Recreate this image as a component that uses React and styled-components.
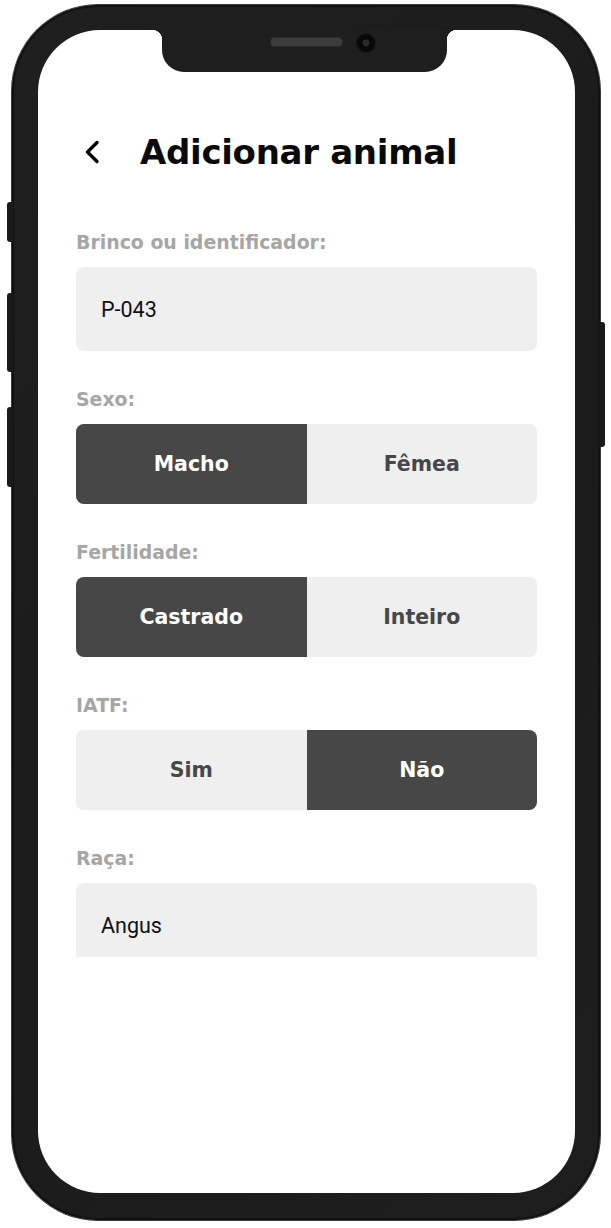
import React from 'react';
import styled, { createGlobalStyle } from 'styled-components';

const GlobalStyle = createGlobalStyle`
  html, body {
    margin: 0;
    padding: 0;
    background: #ffffff;
  }
  * {
    box-sizing: border-box;
  }
`;

const Page = styled.div`
  padding: 5px 11px 8px 12px;
  background: #ffffff;
`;

// Phone frame
const Phone = styled.div`
  position: relative;
  width: 588px;
  height: 1215px;
  padding: 25px 25px 27px 26px;
  border-radius: 86px;
  background: linear-gradient(135deg, #1f1f1f 0%, #1b1b1b 50%, #1e1e1e 100%);
  box-shadow: inset 0 0 0 2px #111111, 0 0 0 1px #3a3a3a;
`;

const SideButton = styled.div`
  position: absolute;
  top: ${(p) => p.$top}px;
  height: ${(p) => p.$height}px;
  width: 6px;
  background: #1a1a1a;
  ${(p) => (p.$right ? 'right: -5px; border-radius: 0 3px 3px 0;' : 'left: -5px; border-radius: 3px 0 0 3px;')}
`;

const Screen = styled.div`
  position: relative;
  width: 537px;
  height: 1163px;
  border-radius: 62px;
  background: #ffffff;
  overflow: hidden;
  font-family: 'DejaVu Sans', 'Inter', sans-serif;
`;

const Notch = styled.div`
  position: absolute;
  top: 0;
  left: 124px;
  width: 285px;
  height: 42px;
  background: #1e1e1e;
  border-radius: 0 0 22px 22px;

  &::before,
  &::after {
    content: '';
    position: absolute;
    top: 0;
    width: 10px;
    height: 10px;
    background: radial-gradient(circle at 0 100%, transparent 10px, #1e1e1e 10.5px);
  }
  &::before {
    left: -10px;
  }
  &::after {
    right: -10px;
    background: radial-gradient(circle at 100% 100%, transparent 10px, #1e1e1e 10.5px);
  }
`;

const Speaker = styled.div`
  position: absolute;
  top: 7px;
  left: 108px;
  width: 73px;
  height: 10px;
  border-radius: 5px;
  background: #3c3c3c;
  box-shadow: inset 0 0 0 1px #2c2c2c;
`;

const Camera = styled.div`
  position: absolute;
  top: 4px;
  left: 195px;
  width: 18px;
  height: 18px;
  border-radius: 50%;
  background: radial-gradient(circle at 50% 50%, #2a2a2a 0 3px, #080808 4px);
  box-shadow: 0 0 0 1px #151515;
`;

// Header
const Header = styled.div`
  display: flex;
  align-items: center;
  gap: 40px;
  height: 56px;
  margin-top: 94px;
  padding-left: 46px;
`;

const BackButton = styled.button`
  display: flex;
  align-items: center;
  justify-content: center;
  width: 16px;
  height: 24px;
  padding: 0;
  border: none;
  background: none;
  color: #000000;
  cursor: pointer;
`;

const Title = styled.h1`
  margin: 0;
  font-size: 34px;
  font-weight: 700;
  color: #0a0a0a;
  letter-spacing: -0.3px;
`;

// Form
const Form = styled.div`
  display: flex;
  flex-direction: column;
  gap: 36px;
  height: 777px;
  padding: 50px 38px 0;
  overflow: hidden;
`;

const Field = styled.div`
  display: flex;
  flex-direction: column;
`;

const Label = styled.label`
  height: 24px;
  margin-bottom: 13px;
  font-size: 18.9px;
  line-height: 24px;
  font-weight: 700;
  color: #a6a6a6;
`;

const Input = styled.div`
  display: flex;
  align-items: center;
  height: 84px;
  padding: 0 25px;
  border-radius: 8px;
  background: #efefef;
  font-family: 'Roboto', 'Liberation Sans', sans-serif;
  font-size: 21.5px;
  color: #111111;
  flex-shrink: 0;
`;

const Segmented = styled.div`
  display: grid;
  grid-template-columns: 1fr 1fr;
  height: 80px;
  border-radius: 8px;
  overflow: hidden;
  background: #efefef;
`;

const Segment = styled.button`
  border: none;
  padding: 0;
  font-family: 'DejaVu Sans', 'Inter', sans-serif;
  font-size: 20.5px;
  font-weight: 700;
  cursor: pointer;
  background: ${(p) => (p.$active ? '#474747' : '#efefef')};
  color: ${(p) => (p.$active ? '#ffffff' : '#474747')};
`;

const ChevronLeft = () => (
  <svg width="16" height="24" viewBox="0 0 16 24" fill="none">
    <path d="M13 2.5 L3.5 12 L13 21.5" stroke="currentColor" strokeWidth="3.4" strokeLinecap="round" strokeLinejoin="round" />
  </svg>
);

const SegmentField = ({ label, options, value }) => (
  <Field>
    <Label>{label}</Label>
    <Segmented>
      {options.map((opt) => (
        <Segment key={opt} $active={opt === value}>
          {opt}
        </Segment>
      ))}
    </Segmented>
  </Field>
);

const App = () => {
  return (
    <>
      <GlobalStyle />
      <Page>
        <Phone>
          <SideButton $top={197} $height={40} />
          <SideButton $top={288} $height={79} />
          <SideButton $top={402} $height={80} />
          <SideButton $right $top={317} $height={125} />
          <Screen>
            <Notch>
              <Speaker />
              <Camera />
            </Notch>
            <Header>
              <BackButton aria-label="Voltar">
                <ChevronLeft />
              </BackButton>
              <Title>Adicionar animal</Title>
            </Header>
            <Form>
              <Field>
                <Label>Brinco ou identificador:</Label>
                <Input>P-043</Input>
              </Field>
              <SegmentField label="Sexo:" options={['Macho', 'Fêmea']} value="Macho" />
              <SegmentField label="Fertilidade:" options={['Castrado', 'Inteiro']} value="Castrado" />
              <SegmentField label="IATF:" options={['Sim', 'Não']} value="Não" />
              <Field>
                <Label>Raça:</Label>
                <Input>Angus</Input>
              </Field>
            </Form>
          </Screen>
        </Phone>
      </Page>
    </>
  );
};

export default App;
